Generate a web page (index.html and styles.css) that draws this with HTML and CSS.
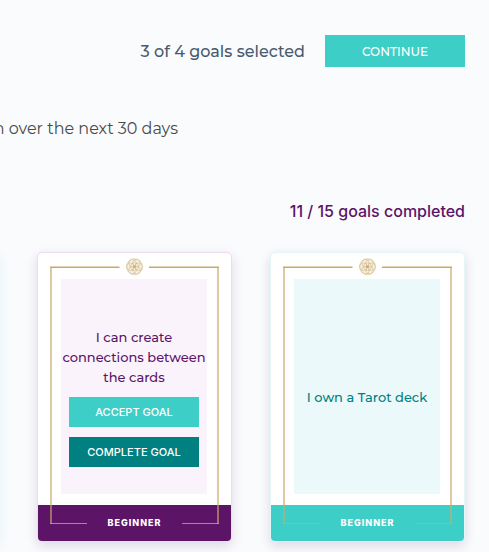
FILE: index.html
```html
<!DOCTYPE html>
<html lang="en">
<head>
    <meta charset="UTF-8">
    <meta name="viewport" content="width=device-width, initial-scale=1.0">
    <title>Goals</title>
    <link rel="stylesheet" href="styles.css">
</head>
<body>
    <!-- shared card decoration -->
    <svg class="sprite" width="0" height="0" aria-hidden="true">
        <symbol id="frame" viewBox="0 0 195 290">
            <g fill="none" stroke="#c8a96a">
                <path d="M14 15V272M181 15V272" stroke-width="2" opacity="0.62"/>
                <path d="M13 15.2H82.5M112 15.2H182" stroke-width="1.4"/>
                <path d="M13 271.5H50M145 271.5H182" stroke-width="1" opacity="0.8"/>
            </g>
            <g fill="none" stroke="#c8a96a" stroke-width="0.6" stroke-opacity="0.7" transform="translate(97.5 14.7)">
                <circle r="8" fill="#f6f0e2"/>
                <circle r="4"/>
                <circle cx="4" r="3.8"/>
                <circle cx="-4" r="3.8"/>
                <circle cx="2" cy="3.5" r="3.8"/>
                <circle cx="-2" cy="3.5" r="3.8"/>
                <circle cx="2" cy="-3.5" r="3.8"/>
                <circle cx="-2" cy="-3.5" r="3.8"/>
                <circle r="1" fill="#c8a96a"/>
            </g>
        </symbol>
    </svg>

    <header class="top-bar">
        <span class="selected">3 of 4 goals selected</span>
        <button class="btn continue" type="button">CONTINUE</button>
    </header>

    <div class="intro">
        <p>n over the next 30 days</p>
    </div>

    <p class="completed">11 / 15 goals completed</p>

    <main class="cards">
        <article class="card teal active"></article>
        <article class="card purple">
            <div class="panel">
                <h2>I can create connections between the cards</h2>
                <button class="btn accept" type="button">ACCEPT GOAL</button>
                <button class="btn complete" type="button">COMPLETE GOAL</button>
            </div>
            <div class="level">BEGINNER</div>
            <svg class="frame" aria-hidden="true"><use href="#frame"/></svg>
        </article>
        <article class="card teal">
            <div class="panel">
                <h2>I own a Tarot deck</h2>
            </div>
            <div class="level">BEGINNER</div>
            <svg class="frame" aria-hidden="true"><use href="#frame"/></svg>
        </article>
    </main>
</body>
</html>
```
FILE: styles.css
```css
* {
    box-sizing: border-box;
}
body {
    margin: 0;
    padding: 35px 24px 10px;
    font-family: "Montserrat", "Inter", sans-serif;
    background-color: #fafbfd;
    overflow: hidden;
}
.sprite {
    position: absolute;
}
.top-bar {
    display: flex;
    justify-content: flex-end;
    align-items: center;
    gap: 20px;
}
.selected {
    font-size: 16px;
    font-weight: 500;
    color: #4a5b70;
}
.btn {
    border: none;
    padding: 0;
    height: 30px;
    width: 130px;
    font-family: "Inter", sans-serif;
    font-size: 11px;
    font-weight: 500;
    color: #fff;
    background-color: #3ecec8;
    cursor: pointer;
}
.continue {
    height: 32px;
    width: 140px;
    font-family: "Montserrat", "Inter", sans-serif;
    font-size: 12px;
}
.intro {
    display: flex;
    justify-content: flex-end;
    width: 178px;
    margin: 50px 0 0 -24px;
    white-space: nowrap;
}
.intro p {
    margin: 0;
    font-size: 16px;
    line-height: 24px;
    color: #4a4a4a;
}
.completed {
    margin: 58px 0 0;
    font-family: "Inter", sans-serif;
    font-size: 16px;
    line-height: 24px;
    font-weight: 500;
    text-align: right;
    color: #5c1467;
}
.cards {
    display: flex;
    justify-content: flex-end;
    gap: 38px;
    margin-top: 29px;
}
.card {
    position: relative;
    display: flex;
    flex-direction: column;
    flex: none;
    width: 195px;
    padding-top: 26px;
    border: 1px solid;
    border-radius: 5px;
    background-color: #fff;
    box-shadow: 0 4px 12px rgba(70, 20, 90, 0.15);
}
.active {
    box-shadow: 0 4px 12px rgba(62, 206, 200, 0.15);
}
.panel {
    display: flex;
    flex-direction: column;
    align-items: center;
    justify-content: center;
    gap: 10px;
    min-height: 215px;
    margin: 0 24px 11px 23px;
    padding-top: 21px;
}
.panel h2 {
    margin: 0;
    font-size: 13px;
    line-height: 20px;
    font-weight: 500;
    text-align: center;
}
.complete {
    background-color: #008080;
}
.level {
    height: 36px;
    border-radius: 0 0 4px 4px;
    font-family: "Inter", sans-serif;
    font-size: 9px;
    line-height: 36px;
    font-weight: 800;
    letter-spacing: 1px;
    text-align: center;
    color: #fff;
}
.purple {
    border-color: #eddcf0;
}
.purple .panel {
    background-color: #faf3fc;
    color: #5c1467;
}
.purple .level {
    background-color: #5c1467;
}
.teal {
    border-color: #e3f7f8;
}
.teal .panel {
    background-color: #ebf9fa;
    color: #008080;
}
.teal .level {
    background-color: #3ecec8;
}
/* gold line drawn over the card and its footer */
.frame {
    position: absolute;
    top: -1px;
    left: -1px;
    width: 195px;
    height: 290px;
    pointer-events: none;
}
```
